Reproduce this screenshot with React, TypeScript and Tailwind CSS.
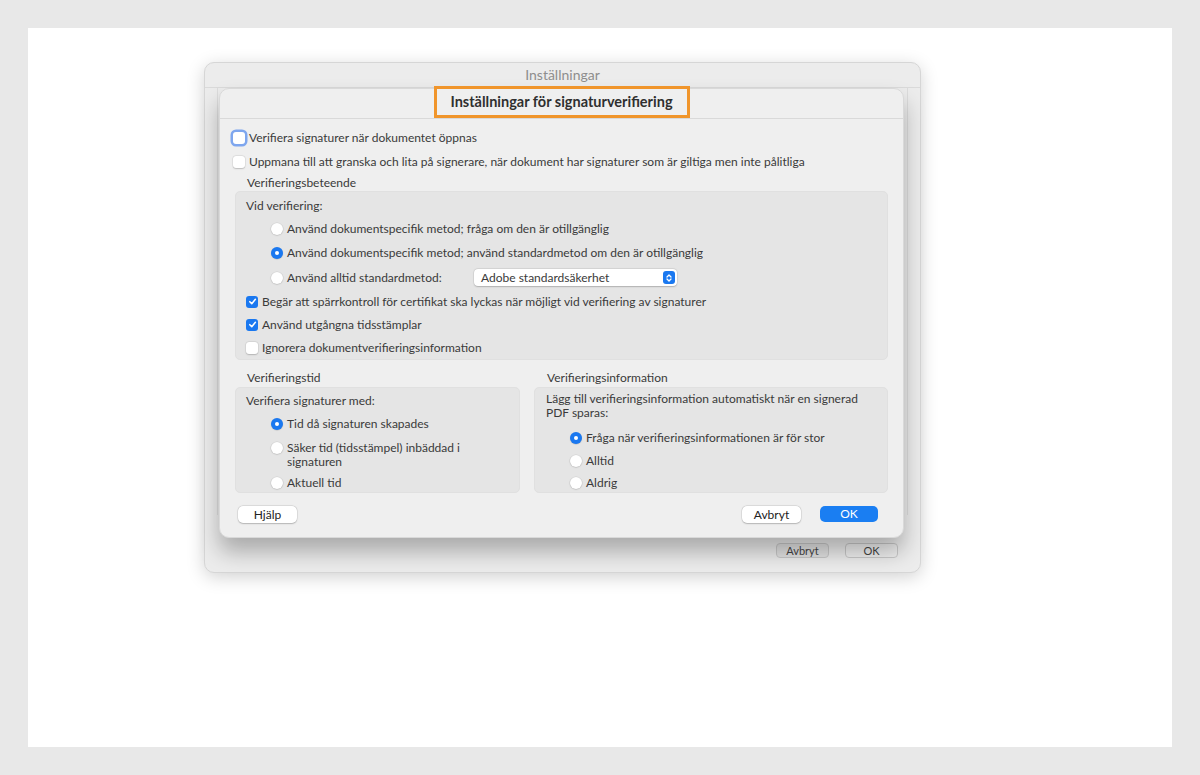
import React from "react";

function Radio({ checked = false }: { checked?: boolean }) {
  if (checked) {
    return (
      <span className="w-[12px] h-[12px] rounded-full bg-[#1a78f0] flex items-center justify-center shrink-0 shadow-[0_0.5px_1px_rgba(0,0,0,0.2)]">
        <span className="w-[4px] h-[4px] rounded-full bg-white" />
      </span>
    );
  }
  return (
    <span className="block w-[12px] h-[12px] rounded-full bg-white shrink-0 shadow-[0_0_0_0.5px_rgba(0,0,0,0.07),0_0.5px_1.5px_rgba(0,0,0,0.18)]" />
  );
}

function Check({ checked = false, focus = false }: { checked?: boolean; focus?: boolean }) {
  if (checked) {
    return (
      <span className="w-[12px] h-[12px] rounded-[3px] bg-[#1a78f0] flex items-center justify-center shrink-0">
        <svg width="9" height="9" viewBox="0 0 10 10">
          <path d="M2 5.2 L4.2 7.4 L8.2 2.6" fill="none" stroke="white" strokeWidth="1.7" strokeLinecap="round" strokeLinejoin="round" />
        </svg>
      </span>
    );
  }
  if (focus) {
    return (
      <span className="block w-[12px] h-[12px] rounded-[3px] bg-white shrink-0 shadow-[0_0_0_2.5px_#7ea6ee]" />
    );
  }
  return (
    <span className="block w-[12px] h-[12px] rounded-[3px] bg-white shrink-0 shadow-[0_0_0_0.5px_rgba(0,0,0,0.07),0_0.5px_1.5px_rgba(0,0,0,0.18)]" />
  );
}

export default function App() {
  return (
    <div className="w-[1200px] h-[775px] bg-[#e8e8e8] p-[28px] font-['Lato','Noto_Sans',sans-serif] text-[12px] text-[#3a3a3a] leading-[14px]">
      <div className="relative w-full h-full bg-white">
        {/* Back window */}
        <div className="absolute left-[176px] top-[34px] w-[717px] h-[511px] rounded-[10px] bg-[#ececec] border border-[#d6d6d6] shadow-[0_4px_18px_rgba(0,0,0,0.18)] flex flex-col overflow-hidden">
          <div className="h-[25px] shrink-0 flex items-center justify-center border-b border-[#dadada] text-[14px] text-[#8e8e8e]">
            Inställningar
          </div>
          <div className="mx-[12px] h-[427px] border-l border-r border-[#dcdcdc]" />
          <div className="flex justify-end gap-[16px] pr-[22px] pt-[28px]">
            <div className="w-[53px] h-[15px] rounded-[4px] bg-[#e2e2e2] border border-[#c9c9c9] flex items-center justify-center text-[11px] text-[#444]">
              Avbryt
            </div>
            <div className="w-[53px] h-[15px] rounded-[4px] bg-[#efefef] border border-[#c9c9c9] flex items-center justify-center text-[11px] text-[#444]">
              OK
            </div>
          </div>
        </div>

        {/* Front dialog */}
        <div className="absolute left-[191px] top-[60px] w-[685px] h-[450px] rounded-[10px] bg-[#efefef] border border-[#d9d9d9] shadow-[0_14px_22px_rgba(0,0,0,0.28)] flex flex-col">
          <div className="h-[30px] shrink-0 flex justify-center border-b border-[#d9d9d9]">
            <div className="mt-[-3px] h-[32px] w-[256px] border-[3px] border-[#f0952b] bg-[#efefef] flex items-center justify-center text-[14.5px] font-bold text-[#2f2f2f]">
              Inställningar för signaturverifiering
            </div>
          </div>

          <div className="flex flex-col px-[15px] pt-[7px]">
            <div className="h-[24px] flex items-center gap-[4px] -ml-[2px]">
              <Check focus />
              <span>Verifiera signaturer när dokumentet öppnas</span>
            </div>
            <div className="h-[24px] flex items-center gap-[4px] -ml-[2px]">
              <Check />
              <span>Uppmana till att granska och lita på signerare, när dokument har signaturer som är giltiga men inte pålitliga</span>
            </div>
            <div className="h-[17px] flex items-center pl-[12px]">Verifieringsbeteende</div>

            <div className="h-[169px] rounded-[5px] bg-[#e5e5e5] border border-[#e0e0e0] pt-[3px] pl-[10px] flex flex-col">
              <div className="h-[22px] flex items-center">Vid verifiering:</div>
              <div className="h-[24px] flex items-center gap-[4px] pl-[25px]">
                <Radio />
                <span>Använd dokumentspecifik metod; fråga om den är otillgänglig</span>
              </div>
              <div className="h-[24px] flex items-center gap-[4px] pl-[25px]">
                <Radio checked />
                <span>Använd dokumentspecifik metod; använd standardmetod om den är otillgänglig</span>
              </div>
              <div className="h-[26px] flex items-center gap-[4px] pl-[25px]">
                <Radio />
                <span className="w-[183px]">Använd alltid standardmetod:</span>
                <div className="w-[203px] h-[17px] rounded-[4px] bg-white shadow-[0_0_0_0.5px_rgba(0,0,0,0.08),0_0.5px_1.5px_rgba(0,0,0,0.2)] flex items-center justify-between pl-[7px] pr-[2px]">
                  <span>Adobe standardsäkerhet</span>
                  <span className="w-[12px] h-[13px] rounded-[3px] bg-[#1a78f0] flex items-center justify-center">
                    <svg width="8" height="10" viewBox="0 0 8 10">
                      <path d="M2 4 L4 2 L6 4 M2 6 L4 8 L6 6" fill="none" stroke="white" strokeWidth="1.3" strokeLinecap="round" strokeLinejoin="round" />
                    </svg>
                  </span>
                </div>
              </div>
              <div className="h-[23px] flex items-center gap-[4px]">
                <Check checked />
                <span>Begär att spärrkontroll för certifikat ska lyckas när möjligt vid verifiering av signaturer</span>
              </div>
              <div className="h-[23px] flex items-center gap-[4px]">
                <Check checked />
                <span>Använd utgångna tidsstämplar</span>
              </div>
              <div className="h-[23px] flex items-center gap-[4px]">
                <Check />
                <span>Ignorera dokumentverifieringsinformation</span>
              </div>
            </div>

            <div className="flex gap-[14px]">
              <div className="w-[285px] flex flex-col">
                <div className="h-[27px] pt-[9px] flex items-center pl-[12px]">Verifieringstid</div>
                <div className="h-[106px] rounded-[5px] bg-[#e5e5e5] border border-[#e0e0e0] pt-[2px] pl-[10px] flex flex-col overflow-hidden">
                  <div className="h-[22px] flex items-center">Verifiera signaturer med:</div>
                  <div className="h-[24px] flex items-center gap-[4px] pl-[25px]">
                    <Radio checked />
                    <span>Tid då signaturen skapades</span>
                  </div>
                  <div className="h-[38px] flex items-start gap-[4px] pl-[25px] pt-[5px]">
                    <div className="pt-[1px]">
                      <Radio />
                    </div>
                    <span className="w-[190px]">Säker tid (tidsstämpel) inbäddad i signaturen</span>
                  </div>
                  <div className="h-[19px] flex items-center gap-[4px] pl-[25px]">
                    <Radio />
                    <span>Aktuell tid</span>
                  </div>
                </div>
              </div>
              <div className="w-[354px] flex flex-col">
                <div className="h-[27px] pt-[9px] flex items-center pl-[13px]">Verifieringsinformation</div>
                <div className="h-[106px] rounded-[5px] bg-[#e5e5e5] border border-[#e0e0e0] pt-[4px] pl-[11px] flex flex-col overflow-hidden">
                  <div className="h-[28px] w-[320px]">Lägg till verifieringsinformation automatiskt när en signerad PDF sparas:</div>
                  <div className="h-[24px] mt-[6px] flex items-center gap-[4px] pl-[24px]">
                    <Radio checked />
                    <span>Fråga när verifieringsinformationen är för stor</span>
                  </div>
                  <div className="h-[24px] flex items-center gap-[4px] pl-[24px]">
                    <Radio />
                    <span>Alltid</span>
                  </div>
                  <div className="h-[19px] flex items-center gap-[4px] pl-[24px]">
                    <Radio />
                    <span>Aldrig</span>
                  </div>
                </div>
              </div>
            </div>

            <div className="mt-[13px] flex items-center justify-between pl-[3px] pr-[10px]">
              <div className="w-[59px] h-[17px] rounded-[5px] bg-white shadow-[0_0_0_0.5px_rgba(0,0,0,0.1),0_0.5px_1.5px_rgba(0,0,0,0.2)] flex items-center justify-center text-[#222]">
                Hjälp
              </div>
              <div className="flex gap-[19px]">
                <div className="w-[59px] h-[17px] rounded-[5px] bg-white shadow-[0_0_0_0.5px_rgba(0,0,0,0.1),0_0.5px_1.5px_rgba(0,0,0,0.2)] flex items-center justify-center text-[#222]">
                  Avbryt
                </div>
                <div className="w-[58px] h-[16px] rounded-[5px] bg-[#1a7ef2] flex items-center justify-center text-white">
                  OK
                </div>
              </div>
            </div>
          </div>
        </div>
      </div>
    </div>
  );
}
